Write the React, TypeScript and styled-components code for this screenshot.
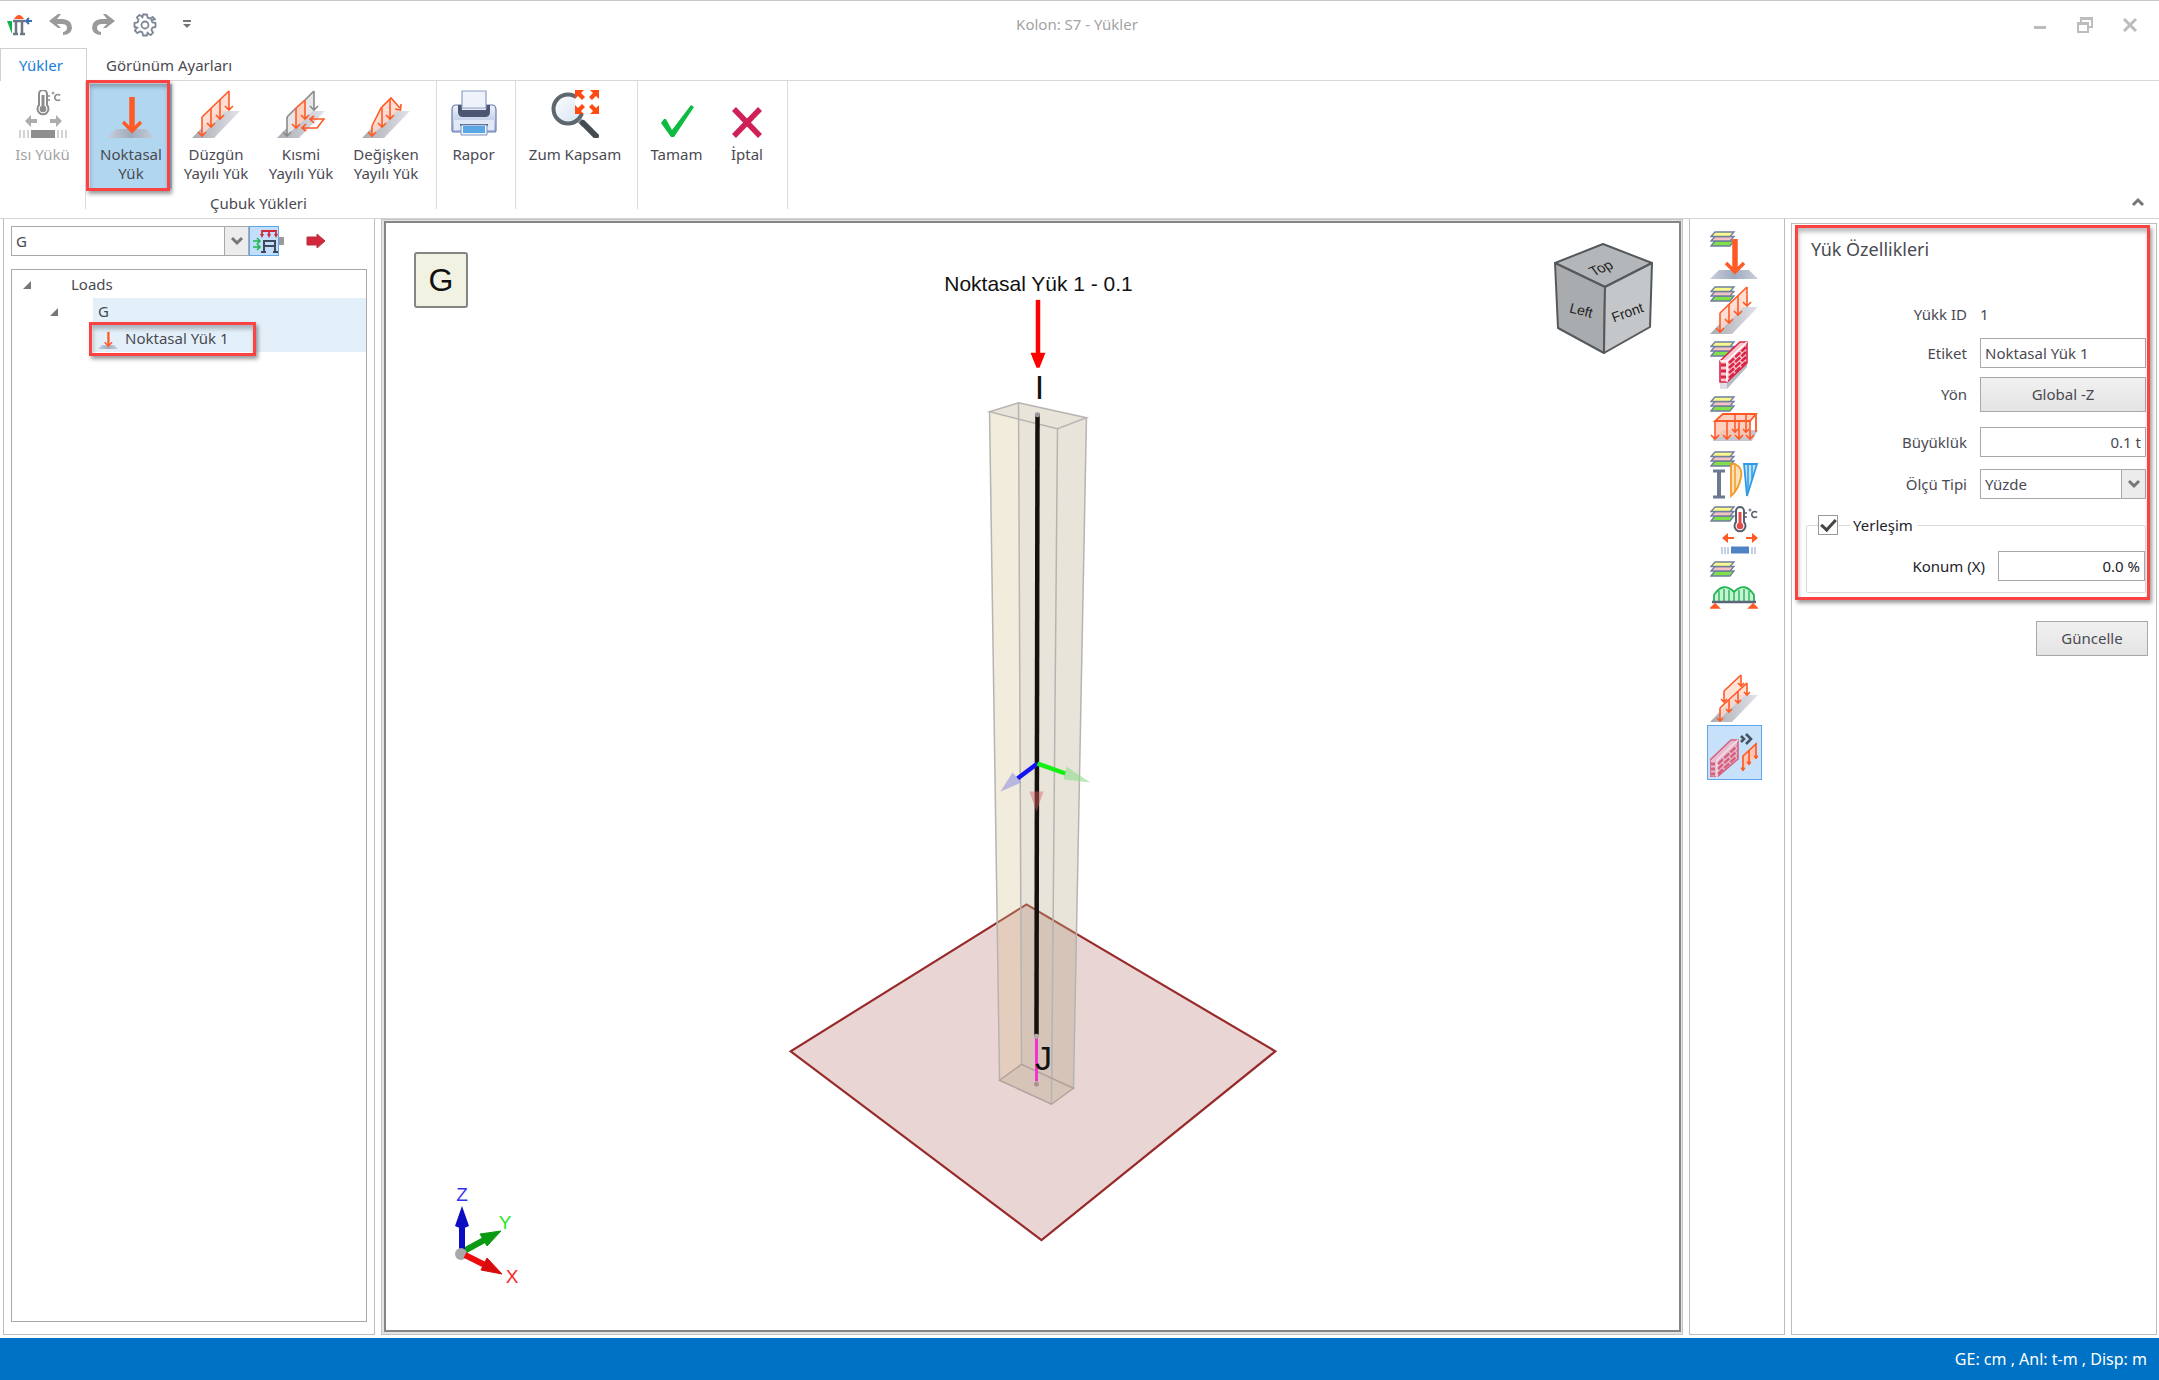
import React from "react";
import styled, { createGlobalStyle, css } from "styled-components";

const uiFont = '"Noto Sans", "Open Sans", sans-serif';
const orange = "#ff5a26";

const GlobalStyle = createGlobalStyle`
  * { box-sizing: border-box; }
  body { margin: 0; background: #fff; }
  button, input, select { font: inherit; color: inherit; }
`;

/* ---------- shell ---------- */

const Window = styled.div`
  min-height: 100vh;
  display: flex;
  flex-direction: column;
  border-top: 1px solid #c8c8c8;
  background: #fff;
  color: #4a4a52;
  font: 15px/19px ${uiFont};
`;

const TitleBar = styled.header`
  height: 47px;
  display: grid;
  grid-template-columns: 1fr auto 1fr;
  align-items: center;
`;

const QuickAccess = styled.div`
  display: flex;
  align-items: center;
  gap: 16px;
  padding-left: 6px;
`;

const IconButton = styled.button`
  display: grid;
  place-items: center;
  width: 26px;
  height: 26px;
  padding: 0;
  border: 0;
  background: none;
`;

const WindowTitle = styled.h1`
  margin: 0;
  font: inherit;
  padding-right: 5px;
  color: #a3a3a3;
`;

const WindowButtons = styled.div`
  display: flex;
  justify-content: flex-end;
  gap: 19px;
  padding-right: 16px;
`;

const TabBar = styled.nav`
  height: 33px;
  display: flex;
  border-bottom: 1px solid #d8d8d8;
`;

const Tab = styled.button<{ $active?: boolean }>`
  padding: 0 18px;
  height: 33px;
  border: 1px solid transparent;
  border-bottom: 0;
  background: none;
  text-align: left;
  ${(p) =>
    p.$active &&
    css`
      width: 87px;
      color: #1580dc;
      background: #fff;
      border-color: #d0d0d0;
    `}
`;

const Ribbon = styled.div`
  display: flex;
  height: 138px;
  border-bottom: 1px solid #d4d4d4;
`;

const RibbonGroup = styled.section<{ $pad?: string }>`
  display: flex;
  flex-direction: column;
  justify-content: space-between;
  padding: ${(p) => p.$pad ?? "0"};
  margin-bottom: 9px;
  padding-top: 3px;
  border-right: 1px solid #dcdcdc;
`;

const RibbonButtons = styled.div`
  display: flex;
  gap: 3px;
`;

const RibbonButton = styled.button<{ $w: number; $selected?: boolean }>`
  position: relative;
  display: flex;
  flex-direction: column;
  align-items: center;
  gap: 7px;
  width: ${(p) => p.$w}px;
  height: 105px;
  padding: 6px 0 0;
  border: 0;
  background: ${(p) => (p.$selected ? "#b1d6f0" : "none")};
  white-space: pre-line;
  &:disabled { color: #a4a4a4; }
`;

const GroupCaption = styled.div`
  text-align: center;
  line-height: 11px;
`;

const RibbonEnd = styled.div`
  flex: 1;
  display: flex;
  justify-content: flex-end;
  align-items: flex-end;
  padding: 0 8px 3px 0;
`;

const Annotation = styled.div<{ $inset: string }>`
  position: absolute;
  inset: ${(p) => p.$inset};
  border: 3px solid #fb4343;
  box-shadow: 2px 3px 4px rgba(0, 0, 0, 0.4), inset 1px 4px 4px rgba(0, 0, 0, 0.26);
  pointer-events: none;
`;

const Workspace = styled.main`
  flex: 1;
  display: grid;
  grid-template-columns: 372px minmax(0, 1fr) 96px 366px;
  gap: 6px;
  padding: 0 2px 3px 3px;
`;

const StatusBar = styled.footer`
  height: 42px;
  display: flex;
  align-items: center;
  justify-content: flex-end;
  padding-right: 12px;
  background: #0072c6;
  color: #fff;
  font-size: 16px;
`;

/* ---------- left panel ---------- */

const LoadsPanel = styled.aside`
  display: flex;
  flex-direction: column;
  padding: 7px 7px 12px;
  border: 1px solid #bdbdbd;
  border-top: 0;
`;

const LoadPicker = styled.div`
  display: flex;
  align-items: center;
  height: 30px;
  margin-bottom: 13px;
`;

const SelectBox = styled.div<{ $w?: number }>`
  display: grid;
  grid-template-columns: 1fr 24px;
  width: ${(p) => (p.$w ? p.$w + "px" : "100%")};
  height: 30px;
  border: 1px solid #a9a9a9;
`;

const Select = styled.select`
  grid-area: 1 / 1 / 2 / 3;
  appearance: none;
  border: 0;
  padding: 0 4px;
  background: #fff;
`;

const SelectArrow = styled.span`
  grid-area: 1 / 2;
  display: grid;
  place-items: center;
  border-left: 1px solid #a9a9a9;
  background: #ececec;
  pointer-events: none;
`;

const FrameToggle = styled.button`
  width: 30px;
  height: 30px;
  padding: 0;
  border: 1px solid #5ea5ea;
  background: #c2defa;
`;

const Grip = styled.span`
  width: 5px;
  height: 8px;
  background: #9b9b9b;
`;

const GoButton = styled(IconButton)`
  margin-left: 19px;
`;

const Tree = styled.ul`
  flex: 1;
  margin: 0;
  padding: 1px 0;
  list-style: none;
  border: 1px solid #a9a9a9;
`;

const TreeRow = styled.li<{ $level: number }>`
  position: relative;
  display: grid;
  grid-template-columns: 16px 16px 1fr;
  height: 27px;
  padding-left: ${(p) => 4 + p.$level * 27}px;
  align-items: center;
`;

const TreeLabel = styled.span<{ $selected?: boolean }>`
  grid-column: 3;
  display: flex;
  align-items: center;
  gap: 7px;
  height: 27px;
  margin-left: 18px;
  padding-left: 5px;
  background: ${(p) => (p.$selected ? "#e3f0fa" : "none")};
`;

const TreeCaret = styled.svg`
  grid-column: 1;
  justify-self: end;
`;

/* ---------- viewport ---------- */

const ViewFrame = styled.section`
  border: 1px solid #c4c4c4;
  padding: 1px 1px 2px 2px;
  background: #e4e4e4;
  display: flex;
`;

const Canvas = styled.div`
  position: relative;
  flex: 1;
  border: 2px solid #858585;
  background: #fff;
  overflow: hidden;
`;

const Scene = styled.svg`
  position: absolute;
  inset: 0;
  width: 100%;
  height: 100%;
`;

const LoadBadge = styled.div`
  position: absolute;
  left: 28px;
  top: 29px;
  width: 54px;
  height: 56px;
  display: grid;
  place-items: center;
  border: 2px solid #858585;
  border-radius: 3px;
  background: #f2f2e3;
  color: #111;
  font: 32px/36px "Liberation Sans", sans-serif;
`;

const ViewCube = styled.svg`
  position: absolute;
  right: 24px;
  top: 17px;
`;

const AxisTriad = styled.svg`
  position: absolute;
  left: 54px;
  bottom: 37px;
`;

/* ---------- tool strip ---------- */

const ToolStrip = styled.aside`
  display: flex;
  flex-direction: column;
  align-items: center;
  padding: 8px 6px 0 0;
  border: 1px solid #bdbdbd;
  border-top: 0;
`;

const ToolButton = styled.button<{ $selected?: boolean; $gap?: boolean }>`
  display: grid;
  place-items: center;
  width: 55px;
  height: 55px;
  padding: 0;
  margin-top: ${(p) => (p.$gap ? "58px" : "0")};
  border: 1px solid ${(p) => (p.$selected ? "#5ea5ea" : "transparent")};
  background: ${(p) => (p.$selected ? "#c8e1fa" : "none")};
`;

/* ---------- properties ---------- */

const Properties = styled.aside`
  margin-top: 4px;
  border: 1px solid #bdbdbd;
`;

const PropertySection = styled.form`
  position: relative;
  padding: 12px 10px 7px 14px;
`;

const SectionTitle = styled.h2`
  margin: 0 0 37px 5px;
  font: 18px/26px ${uiFont};
`;

const Row = styled.div<{ $top?: number }>`
  display: grid;
  grid-template-columns: 161px 1fr;
  column-gap: 13px;
  align-items: center;
  min-height: 30px;
  margin-top: ${(p) => p.$top ?? 0}px;
  & > :first-child { text-align: right; }
`;

const TextBox = styled.input<{ $right?: boolean }>`
  width: 100%;
  min-width: 0;
  height: 30px;
  padding: 0 4px;
  border: 1px solid #a9a9a9;
  background: #fff;
  text-align: ${(p) => (p.$right ? "right" : "left")};
`;

const PushButton = styled.button`
  height: 35px;
  min-width: 112px;
  border: 1px solid #a9a9a9;
  background: linear-gradient(#f1f1f1, #e4e4e4);
`;

const Placement = styled.fieldset`
  margin: 16px 0 0;
  padding: 16px 0 11px;
  min-width: 0;
  border: 1px solid #dadada;
  border-radius: 2px;
  color: #22222a;
`;

const PlacementLegend = styled.legend`
  display: flex;
  align-items: center;
  height: 20px;
  margin-left: 11px;
  padding: 0;
`;

const LegendRule = styled.span`
  width: 12px;
  height: 1px;
  background: #dadada;
`;

const LegendText = styled.label`
  padding: 0 4px 0 3px;
  background: #fff;
`;

const CheckBox = styled.input`
  appearance: none;
  width: 20px;
  height: 20px;
  margin: 0;
  border: 1px solid #999;
  background: #fff;
  display: grid;
  place-items: center;
  &:checked::after {
    content: "";
    width: 6px;
    height: 12px;
    margin-top: -3px;
    border: solid #444;
    border-width: 0 3px 3px 0;
    transform: rotate(42deg);
  }
`;

const PlacementRow = styled.div`
  display: grid;
  grid-template-columns: 1fr 147px;
  column-gap: 13px;
  align-items: center;
  text-align: right;
`;

const Actions = styled.div`
  display: flex;
  justify-content: flex-end;
  padding: 21px 8px 0;
`;

/* ---------- icon parts ---------- */

const Svg = ({ size = 48, children }: { size?: number; children: React.ReactNode }) => (
  <svg width={size} height={size} viewBox="0 0 48 48" fill="none" aria-hidden="true">
    {children}
  </svg>
);

const HiddenSvg = styled.svg`
  position: absolute;
`;

const Defs = () => (
  <HiddenSvg width="0" height="0" aria-hidden="true">
    <defs>
      <linearGradient id="plate" x1="0" x2="1">
        <stop offset="0" stopColor="#a9abb2" />
        <stop offset="1" stopColor="#e2e3ea" />
      </linearGradient>
      <linearGradient id="plateMid" x1="0" x2="1">
        <stop offset="0" stopColor="#c9cfdb" />
        <stop offset="0.5" stopColor="#9fabbd" />
        <stop offset="1" stopColor="#c9cfdb" />
      </linearGradient>
      <linearGradient id="printer" x1="0" x2="0" y1="0" y2="1">
        <stop offset="0" stopColor="#eef2fb" />
        <stop offset="1" stopColor="#a9b8dd" />
      </linearGradient>
      <linearGradient id="glass" x1="0" x2="1" y1="0" y2="1">
        <stop offset="0" stopColor="#ffffff" />
        <stop offset="1" stopColor="#d3e2f1" />
      </linearGradient>
    </defs>
  </HiddenSvg>
);

const Down = ({ x, from, to, c = orange, w = 4 }: { x: number; from: number; to: number; c?: string; w?: number }) => (
  <path d={`M${x} ${from}V${to}M${x - w} ${to - w}L${x} ${to}L${x + w} ${to - w}`} stroke={c} strokeWidth="1.6" />
);

const Slab = () => <path d="M0 48L26 21H48L22 48Z" fill="url(#plate)" />;

const Layers = () => (
  <g stroke="#6f7f9f" strokeWidth="1.3">
    <path d="M1 15L5 10H24L20 15Z" fill="#7fe04a" />
    <path d="M1 10L5 5.500H24L20 10Z" fill="#f4c3c3" />
    <path d="M1 5.500L5 1H24L20 5.500Z" fill="#fbf98b" />
  </g>
);

const PointLoad = ({ size, layers }: { size?: number; layers?: boolean }) => (
  <Svg size={size}>
    <path d="M0 48L9 39H39L48 48Z" fill="url(#plateMid)" />
    {layers && <Layers />}
    <path d={layers ? "M25 8V40" : "M25 7V40"} stroke={orange} strokeWidth="5.500" />
    <path d="M16 32L25 41L34 32" stroke={orange} strokeWidth="3.500" />
  </Svg>
);

const UniformLoad = ({ layers }: { layers?: boolean }) => (
  <Svg>
    <Slab />
    {layers && <Layers />}
    <path d="M10 27L37 1V18L28 27L19 36L10 45Z" fill="#ffd9cc" fillOpacity="0.85" />
    <path d="M10 27L37 1" stroke={orange} strokeWidth="1.600" />
    <Down x={10} from={27} to={46} />
    <Down x={19} from={18} to={37} />
    <Down x={28} from={10} to={29} />
    <Down x={37} from={1} to={20} />
  </Svg>
);

const PartialLoad = () => (
  <Svg>
    <Slab />
    <path d="M10 27L19 18V37L10 45ZM28 10L37 1V20L28 28Z" fill="#e6e6e6" />
    <path d="M19 18L28 10V29L19 37Z" fill="#ffd0c0" />
    <path d="M10 27L19 18M28 10L37 1" stroke="#8a8a8a" strokeWidth="1.600" />
    <Down x={10} from={27} to={46} c="#8a8a8a" />
    <Down x={37} from={1} to={20} c="#8a8a8a" />
    <path d="M19 18L28 10" stroke={orange} strokeWidth="1.600" />
    <Down x={19} from={18} to={38} />
    <Down x={28} from={10} to={29} />
    <path d="M25 38H40L47 29H33M29 34L25 38L29 41M37 26L33 29L37 33" stroke={orange} strokeWidth="1.700" />
  </Svg>
);

const VariableLoad = () => (
  <Svg>
    <Slab />
    <path d="M10 45V35L19 18L29 8L38 18L28 29Z" fill="#ffd9cc" fillOpacity="0.85" />
    <path d="M10 36L19 18L29 8L38 18" stroke={orange} strokeWidth="1.600" />
    <Down x={10} from={36} to={46} />
    <Down x={20} from={18} to={37} />
    <Down x={28} from={9} to={29} />
    <path d="M33 19L38.500 20L39 14" stroke={orange} strokeWidth="1.600" />
  </Svg>
);

const Thermometer = ({ c, hot }: { c: string; hot?: string }) => (
  <g>
    <path d="M20 15V4a4 4 0 0 1 8 0V15a5.500 5.500 0 1 1-8 0Z" fill="#fff" stroke={c} strokeWidth="2" />
    <path d="M24 5V18" stroke={hot ?? c} strokeWidth="3" />
    <circle cx="24" cy="19" r="3.300" fill={hot ?? c} />
    <path d="M28 6H31M28 10H31" stroke={c} strokeWidth="1.500" />
    <circle cx="34" cy="3" r="1" stroke={c} />
    <path d="M41 5.500a3 3 0 1 0 0 4" stroke={c} strokeWidth="1.600" />
  </g>
);

const HeatLoad = () => (
  <Svg>
    <Thermometer c="#8c8c8c" />
    <path d="M6 31L12 25V29H18V33H12V37ZM43 31L37 25V29H31V33H37V37Z" fill="#adadad" />
    <path d="M12 44H36" stroke="#8f8f8f" strokeWidth="8" />
    <path d="M1 40V48M5 40V48M9 40V48M39 40V48M43 40V48M47 40V48" stroke="#c9c9c9" strokeWidth="1.600" />
  </Svg>
);

const HeatTool = () => (
  <Svg>
    <Layers />
    <g transform="translate(6 1)">
      <Thermometer c="#56606c" hot="#e24a4a" />
    </g>
    <path d="M12 32L18 27V31H24V33H18V37ZM48 32L42 27V31H36V33H42V37Z" fill={orange} />
    <path d="M21 44H39" stroke="#4f82c4" strokeWidth="7" />
    <path d="M12 41V48M15 41V48M18 41V48M42 41V48M45 41V48" stroke="#a9bdd6" strokeWidth="1.400" />
  </Svg>
);

const WallTool = () => (
  <Svg>
    <path d="M10 41L37 16V26L17 48H10Z" fill="#b9bcc5" />
    <path d="M10 41V48H17V41Z" fill="#dcdfe6" />
    <Layers />
    <path d="M10 20L30 1H37V22L17 41H10Z" fill="#f9c7cf" stroke="#d92546" strokeWidth="1.600" />
    <path d="M10 20H17V41M17 20L37 1" stroke="#fff" strokeWidth="1.400" />
    <path d="M19 22L36 6M19 27L36 11M19 32L36 16M19 37L36 21" stroke="#d92546" strokeWidth="2.600" strokeDasharray="7 1.500" />
    <path d="M11 24H16M11 30H16M11 36H16" stroke="#d92546" strokeWidth="3" />
  </Svg>
);

const AreaTool = () => (
  <Svg>
    <Layers />
    <path d="M3 42L13 34H48L42 45H3Z" fill="#c4c7cf" />
    <path d="M5 25L13 18H46L40 25V41H5Z" fill="#ffc4b0" fillOpacity="0.800" />
    <path d="M5 25H40L46 18H13ZM46 18V36" stroke={orange} strokeWidth="1.800" />
    {[5, 17, 29, 40].map((x) => (
      <Down key={x} x={x} from={25} to={43} />
    ))}
    <Down x={25} from={18} to={36} w={3} />
    <Down x={36} from={18} to={36} w={3} />
  </Svg>
);

const PressureTool = () => (
  <Svg>
    <Layers />
    <path d="M3 20H15M3 46H15" stroke="#6b7a92" strokeWidth="3" />
    <path d="M9 20V46" stroke="#6b7a92" strokeWidth="4" />
    <path d="M21 13H25Q33 17 31 26Q29 38 21 45Z" fill="#fde2b8" stroke="#f39a2b" strokeWidth="1.800" />
    <path d="M25 13V41" stroke="#f39a2b" strokeWidth="1.500" />
    <path d="M34 13H47L37 45Z" fill="#bfe3fb" stroke="#2e9be6" strokeWidth="1.800" />
    <path d="M38 13V40M42 13V28" stroke="#2e9be6" strokeWidth="1.500" />
  </Svg>
);

const BridgeTool = () => (
  <Svg>
    <Layers />
    <path d="M4 41V34Q13 20 24 31Q35 20 44 34V41Z" fill="#c9f3d5" stroke="#24b556" strokeWidth="1.800" />
    <path d="M9 41V30M14 41V28M19 41V29M24 41V32M29 41V29M34 41V28M39 41V30" stroke="#24b556" strokeWidth="1.400" />
    <path d="M2 41H46" stroke="#59667a" strokeWidth="2.500" />
    <path d="M5 43L1 47H9ZM43 43L39 47H47Z" fill={orange} stroke={orange} strokeWidth="1.600" />
  </Svg>
);

const CombinedTool = () => (
  <Svg>
    <Slab />
    <path d="M14 17L31 1V10L37 9V20L28 28L19 36L10 45V34L14 28Z" fill="#ffd9cc" fillOpacity="0.800" />
    <path d="M14 17L31 1M10 34L37 9" stroke={orange} strokeWidth="1.700" />
    <Down x={14} from={17} to={28} w={3} />
    <Down x={31} from={1} to={12} w={3} />
    <Down x={10} from={34} to={47} w={3} />
    <Down x={19} from={26} to={38} w={3} />
    <Down x={28} from={18} to={29} w={3} />
    <Down x={37} from={9} to={21} w={3} />
  </Svg>
);

const ConvertTool = () => (
  <Svg>
    <path d="M0 31L21 11H28V30L7 48H0Z" fill="#e6bcd0" stroke="#d4627f" strokeWidth="1.600" />
    <path d="M7 31L28 11M7 31V48" stroke="#f6dfe8" strokeWidth="1.400" />
    <path d="M8 35L27 17M8 40L27 22M8 45L27 27" stroke="#d4627f" strokeWidth="2.500" strokeDasharray="7 1.500" />
    <path d="M1 35H5M1 40H5M1 45H5" stroke="#d4627f" strokeWidth="3" />
    <path d="M31 7L34 10L31 13M36 5L41 10L36 15" stroke="#46525f" strokeWidth="2.600" />
    <path d="M33 27L46 15V28L39 34L33 40Z" fill="#ffc7b3" />
    <path d="M33 40V27L46 15V28M39 22V34" stroke={orange} strokeWidth="1.700" />
    <path d="M33 42L31 39H35ZM39 36L37 33H41ZM46 30L44 27H48Z" fill={orange} stroke={orange} />
  </Svg>
);

const PrinterIcon = () => (
  <Svg>
    <path d="M2 20Q2 15 6 15H42Q46 15 46 20V40Q46 42 44 42H4Q2 42 2 40Z" fill="url(#printer)" stroke="#6a7cab" strokeWidth="1.200" />
    <path d="M8 15H12V20H36V15H40V22Q40 27 35 27H13Q8 27 8 22Z" fill="#4b5673" />
    <path d="M12 1H36V18H12Z" fill="#eef2fa" stroke="#8e9dc4" strokeWidth="1.200" />
    <path d="M4 30H44V40H4Z" fill="#e1e8f6" />
    <path d="M10 34H38V36H10Z" fill="#4b5673" />
    <path d="M11 35H37V45H11Z" fill="#eef4fb" stroke="#7f92c0" />
    <path d="M13 36H35V43H13Z" fill="#5aa7e6" />
  </Svg>
);

const ZoomExtentsIcon = () => (
  <Svg>
    <circle cx="17" cy="19" r="14.500" fill="url(#glass)" stroke="#5e676e" strokeWidth="4" />
    <path d="M28 30L33 35" stroke="#848b91" strokeWidth="5" />
    <path d="M32 33L45 46" stroke="#454c52" strokeWidth="6" strokeLinecap="round" />
    <path d="M24 0H48V24H24Z" fill="#fff" />
    <path
      d="M24 0H33L30 3L34 7L31 10L27 6L24 9ZM48 0V9L45 6L41 10L38 7L42 3L39 0ZM24 24V15L27 18L31 14L34 17L30 21L33 24ZM48 24H39L42 21L38 17L41 14L45 18L48 15Z"
      fill="#ff4a12"
    />
  </Svg>
);

const CheckIcon = () => (
  <Svg>
    <path d="M8 33L11 29Q13 28 14 31L19 40L38 15L41 17L21 47H18Z" fill="#0cbc42" />
  </Svg>
);

const CancelIcon = () => (
  <Svg>
    <path d="M11 19L37 46M37 19L11 46" stroke="#cf2158" strokeWidth="5.500" />
  </Svg>
);

const FrameIcon = () => (
  <svg width="28" height="28" viewBox="0 0 28 28" fill="none" aria-hidden="true">
    <path d="M12 9V4H26V9M19 4V9" stroke="#d2283f" strokeWidth="1.800" />
    <path d="M10 7H14L12 11ZM17 7H21L19 11ZM24 7H28L26 11Z" fill="#d2283f" />
    <path d="M14 25V14H25V25M14 19H25M11 25H16M23 25H28" stroke="#3e4a5c" strokeWidth="2" />
    <path d="M3 14H9M3 20H9M7 11L10 14L7 17M7 17L10 20L7 23" stroke="#23b556" strokeWidth="1.600" />
  </svg>
);

const Chevron = ({ up }: { up?: boolean }) => (
  <svg width="14" height="10" viewBox="0 0 14 10" fill="none" aria-hidden="true">
    <path d={up ? "M2 8L7 3L12 8" : "M2 2L7 7L12 2"} stroke="#767676" strokeWidth="3" />
  </svg>
);

const Caret = () => (
  <TreeCaret width="10" height="10" viewBox="0 0 10 10" aria-hidden="true">
    <path d="M9 1V9H1Z" fill="#777" />
  </TreeCaret>
);

const UndoIcon = ({ flip }: { flip?: boolean }) => (
  <svg width="24" height="22" viewBox="0 0 24 22" fill="none" aria-hidden="true">
    <g transform={flip ? "matrix(-1 0 0 1 24 0)" : undefined}>
      <path d="M9 0H12L8 5H14Q23 6 23 14Q22 21 14 21V18Q18 17 18 14Q18 10 13 10H8L12 14H9L0 7Z" fill="#9a9a9a" />
    </g>
  </svg>
);

const GearIcon = () => (
  <svg width="24" height="24" viewBox="0 0 24 24" fill="none" stroke="#7d8695" strokeWidth="1.800" aria-hidden="true">
    <path d="M10 1.500H14L14.600 4.600L17 5.600L19.600 3.900L20.600 4.900L22.100 6.400L18.400 7L19.400 9.400L22.500 10V14L19.400 14.600L18.400 17L20.100 19.600L17.600 22.100L15 20.400L14.600 19.400L14 22.500H10L9.400 19.400L7 18.400L4.400 20.100L1.900 17.600L3.600 15L4.600 14.600L1.500 14V10L4.600 9.400L5.600 7L3.900 4.400L6.400 1.900L9 3.600L9.400 4.600Z" strokeLinejoin="round" />
    <circle cx="12" cy="12" r="3.500" />
  </svg>
);

const AppIcon = () => (
  <svg width="26" height="22" viewBox="0 0 26 22" fill="none" aria-hidden="true">
    <path d="M1 7H6V20Z" fill="#0db34a" />
    <path d="M8 5Q13 -3 18 5Z" fill={orange} />
    <path d="M7 7H19M10 7V20M16 7V20M7 20H12M14 20H19" stroke="#6c7686" strokeWidth="2.500" />
    <path d="M20 7H26M23 4L20 7L23 10" stroke="#3b6fb5" strokeWidth="2" />
  </svg>
);

/* ---------- 3D scene ---------- */

const ColumnScene = () => (
  <Scene viewBox="386 224 1294 1106" role="img" aria-label="Kolon S7">
    <defs>
      <clipPath id="leftFace"><path d="M990 412L1019 403L1022 1065L1000 1081Z" /></clipPath>
      <clipPath id="rightFace"><path d="M1019 403L1087 418L1074 1089L1052 1105L1000 1081L1022 1065Z" /></clipPath>
    </defs>
    <path d="M1027 905L1276 1052L1042 1241L791 1052Z" fill="#ead5d5" stroke="#982a2a" strokeWidth="2.200" />
    <path d="M990 412L1019 403L1022 1065L1000 1081Z" fill="#f2ecdd" />
    <path d="M1019 403L1087 418L1074 1089L1052 1105L1000 1081L1022 1065Z" fill="#e8e4d9" />
    <path d="M990 412L1019 403L1087 418L1058 429Z" fill="#e8e4d9" />
    <path d="M1027 905L1276 1052L1042 1241L791 1052Z" fill="#e4cdbd" stroke="#a65a48" strokeWidth="2" clipPath="url(#leftFace)" />
    <path d="M1027 905L1276 1052L1042 1241L791 1052Z" fill="#d6c4b8" stroke="#a65a48" strokeWidth="2" clipPath="url(#rightFace)" />
    <g fill="none" stroke="#b6b4b2" strokeWidth="1.500">
      <path d="M990 412L1019 403L1087 418L1058 429Z" />
      <path d="M990 412L1000 1081M1019 403L1022 1065M1087 418L1074 1089M1058 429L1052 1105" />
      <path d="M1000 1081L1022 1065L1074 1089L1052 1105Z" stroke="#b3a19b" />
    </g>
    <path d="M1038 414L1037 1036" stroke="#15120d" strokeWidth="4.500" />
    <circle cx="1038" cy="415" r="2.500" fill="#999" />
    <path d="M1037 1038V1082" stroke="#ef35cf" strokeWidth="3" />
    <circle cx="1037" cy="1037" r="2.500" fill="#b3aaa6" />
    <circle cx="1037" cy="1085" r="2.500" fill="#a4938f" />
    <path d="M1030 792H1044L1037 812Z" fill="#d96060" fillOpacity="0.450" />
    <path d="M1038 764L1018 779" stroke="#1414f0" strokeWidth="4.500" />
    <path d="M1013 773L1022 783L1001 792Z" fill="#9a9ae0" fillOpacity="0.650" />
    <path d="M1038 764L1066 774" stroke="#14f014" strokeWidth="4.500" />
    <path d="M1067 767L1064 780L1091 783Z" fill="#8fdc8f" fillOpacity="0.600" />
    <path d="M1038.500 300V355" stroke="#f00" strokeWidth="4.500" />
    <path d="M1031 353H1046L1040 368H1037Z" fill="#f00" />
    <g fill="#111" fontFamily="Liberation Sans, sans-serif" textAnchor="middle">
      <text x="1039" y="291" fontSize="21">Noktasal Yük 1 - 0.1</text>
      <text x="1040" y="399" fontSize="34">I</text>
      <text x="1044" y="1071" fontSize="34">J</text>
    </g>
  </Scene>
);

const Cube = () => (
  <ViewCube width="102" height="114" viewBox="1553 240 102 114" aria-label="Top Left Front" role="img">
    <g stroke="#55595c" strokeWidth="2" strokeLinejoin="round">
      <path d="M1603 244L1652 263L1605 287L1555 263Z" fill="#b4b7b9" />
      <path d="M1555 263L1605 287L1604 353L1558 328Z" fill="#a9acae" />
      <path d="M1652 263L1605 287L1604 353L1650 327Z" fill="#c4c7c9" />
    </g>
    <g fill="#222" fontFamily="Liberation Sans, sans-serif" textAnchor="middle">
      <text transform="translate(1604 272) rotate(-22) skewX(15)" fontSize="14">Top</text>
      <text transform="translate(1580 315) rotate(14)" fontSize="14">Left</text>
      <text transform="translate(1629 317) rotate(-20)" fontSize="14">Front</text>
    </g>
  </ViewCube>
);

const Triad = () => (
  <AxisTriad width="84" height="110" viewBox="440 1184 84 110" aria-label="X Y Z" role="img">
    <path d="M464 1252L486 1240" stroke="#0a9a12" strokeWidth="6" />
    <path d="M480 1235L487 1247L501 1232Z" fill="#0a9a12" stroke="#0a9a12" />
    <path d="M462 1252V1226" stroke="#0c0cc0" strokeWidth="6" />
    <path d="M462 1207L455 1227Q462 1231 469 1227Z" fill="#0c0cc0" />
    <circle cx="461" cy="1255" r="6" fill="#a9a9a9" />
    <path d="M465 1256L485 1266" stroke="#ec0c0c" strokeWidth="6" />
    <path d="M487 1259L481 1271L502 1275Z" fill="#d80c0c" stroke="#d80c0c" />
    <g fontFamily="Liberation Sans, sans-serif" fontSize="19" textAnchor="middle">
      <text x="462" y="1202" fill="#3232f0">Z</text>
      <text x="505" y="1230" fill="#1ee61e">Y</text>
      <text x="512" y="1284" fill="#f52a2a">X</text>
    </g>
  </AxisTriad>
);

const loadButtons = [
  { label: "Noktasal\nYük", icon: <PointLoad />, selected: true },
  { label: "Düzgün\nYayılı Yük", icon: <UniformLoad /> },
  { label: "Kısmi\nYayılı Yük", icon: <PartialLoad /> },
  { label: "Değişken\nYayılı Yük", icon: <VariableLoad /> },
];

const tools = [
  { name: "Noktasal yükler", icon: <PointLoad layers /> },
  { name: "Yayılı yükler", icon: <UniformLoad layers /> },
  { name: "Duvar yükleri", icon: <WallTool /> },
  { name: "Alan yükleri", icon: <AreaTool /> },
  { name: "Basınç yükleri", icon: <PressureTool /> },
  { name: "Isı yükleri", icon: <HeatTool /> },
  { name: "Köprü yükleri", icon: <BridgeTool /> },
  { name: "Birleşik yükler", icon: <CombinedTool />, gap: true },
  { name: "Duvar yükünü dönüştür", icon: <ConvertTool />, selected: true },
];

export default function App() {
  return (
    <Window>
      <GlobalStyle />
      <Defs />
      <TitleBar>
        <QuickAccess>
          <IconButton aria-label="Uygulama"><AppIcon /></IconButton>
          <IconButton aria-label="Geri al"><UndoIcon /></IconButton>
          <IconButton aria-label="Yinele"><UndoIcon flip /></IconButton>
          <IconButton aria-label="Ayarlar"><GearIcon /></IconButton>
          <IconButton aria-label="Özelleştir">
            <svg width="10" height="9" viewBox="0 0 10 9" aria-hidden="true">
              <path d="M1 0H9V2H1ZM1 4H9L5 8Z" fill="#767676" />
            </svg>
          </IconButton>
        </QuickAccess>
        <WindowTitle>Kolon: S7 - Yükler</WindowTitle>
        <WindowButtons>
          <IconButton aria-label="Küçült">
            <svg width="16" height="16" viewBox="0 0 16 16" aria-hidden="true"><path d="M2 9H14V12H2Z" fill="#bdbdbd" /></svg>
          </IconButton>
          <IconButton aria-label="Önceki boyut">
            <svg width="16" height="16" viewBox="0 0 16 16" fill="none" stroke="#bdbdbd" strokeWidth="2" aria-hidden="true">
              <path d="M4 5V1H15V10H12M1 6H11V15H1ZM1 7H11M4 2H15" />
            </svg>
          </IconButton>
          <IconButton aria-label="Kapat">
            <svg width="16" height="16" viewBox="0 0 16 16" stroke="#bdbdbd" strokeWidth="3" aria-hidden="true">
              <path d="M2 2L14 14M14 2L2 14" />
            </svg>
          </IconButton>
        </WindowButtons>
      </TitleBar>

      <TabBar>
        <Tab $active>Yükler</Tab>
        <Tab>Görünüm Ayarları</Tab>
      </TabBar>

      <Ribbon>
        <RibbonGroup>
          <RibbonButton $w={85} disabled><HeatLoad />Isı Yükü</RibbonButton>
        </RibbonGroup>
        <RibbonGroup $pad="0 9px 0 4px">
          <RibbonButtons>
            {loadButtons.map((b) => (
              <RibbonButton key={b.label} $w={82} $selected={b.selected}>
                {b.icon}
                <span>{b.label}</span>
                {b.selected && <Annotation $inset="-4px 2px -2px -4px" />}
              </RibbonButton>
            ))}
          </RibbonButtons>
          <GroupCaption>Çubuk Yükleri</GroupCaption>
        </RibbonGroup>
        <RibbonGroup $pad="0 5px 0 0">
          <RibbonButton $w={73}><PrinterIcon />Rapor</RibbonButton>
        </RibbonGroup>
        <RibbonGroup $pad="0 3px 0 0">
          <RibbonButton $w={118}><ZoomExtentsIcon />Zum Kapsam</RibbonButton>
        </RibbonGroup>
        <RibbonGroup $pad="0 10px 0 1px">
          <RibbonButtons>
            <RibbonButton $w={75}><CheckIcon />Tamam</RibbonButton>
            <RibbonButton $w={60}><CancelIcon />İptal</RibbonButton>
          </RibbonButtons>
        </RibbonGroup>
        <RibbonEnd>
          <IconButton aria-label="Şeridi daralt"><Chevron up /></IconButton>
        </RibbonEnd>
      </Ribbon>

      <Workspace>
        <LoadsPanel>
          <LoadPicker>
            <SelectBox $w={238}>
              <Select aria-label="Yük durumu" defaultValue="G"><option>G</option></Select>
              <SelectArrow><Chevron /></SelectArrow>
            </SelectBox>
            <FrameToggle aria-label="Yükleri göster"><FrameIcon /></FrameToggle>
            <Grip />
            <GoButton aria-label="Git">
              <svg width="20" height="16" viewBox="0 0 20 16" aria-hidden="true">
                <path d="M1 4H11V1L19 8L11 15V12H1Z" fill="#d3283c" stroke="#b5303e" />
              </svg>
            </GoButton>
          </LoadPicker>
          <Tree>
            <TreeRow $level={0}><Caret /><TreeLabel>Loads</TreeLabel></TreeRow>
            <TreeRow $level={1}><Caret /><TreeLabel $selected>G</TreeLabel></TreeRow>
            <TreeRow $level={1}>
              <TreeLabel $selected><PointLoad size={20} />Noktasal Yük 1</TreeLabel>
              <Annotation $inset="-3px 110px -4px 77px" />
            </TreeRow>
          </Tree>
        </LoadsPanel>

        <ViewFrame>
          <Canvas>
            <ColumnScene />
            <LoadBadge>G</LoadBadge>
            <Cube />
            <Triad />
          </Canvas>
        </ViewFrame>

        <ToolStrip>
          {tools.map((t) => (
            <ToolButton key={t.name} aria-label={t.name} $selected={t.selected} $gap={t.gap}>{t.icon}</ToolButton>
          ))}
        </ToolStrip>

        <Properties>
          <PropertySection onSubmit={(e) => e.preventDefault()}>
            <SectionTitle>Yük Özellikleri</SectionTitle>
            <Row><span>Yükk ID</span><span>1</span></Row>
            <Row $top={9}>
              <label htmlFor="tag">Etiket</label>
              <TextBox id="tag" defaultValue="Noktasal Yük 1" />
            </Row>
            <Row $top={9}>
              <label htmlFor="dir">Yön</label>
              <PushButton id="dir" type="button">Global -Z</PushButton>
            </Row>
            <Row $top={15}>
              <label htmlFor="mag">Büyüklük</label>
              <TextBox id="mag" $right defaultValue="0.1 t" />
            </Row>
            <Row $top={12}>
              <label htmlFor="unit">Ölçü Tipi</label>
              <SelectBox>
                <Select id="unit" defaultValue="Yüzde"><option>Yüzde</option></Select>
                <SelectArrow><Chevron /></SelectArrow>
              </SelectBox>
            </Row>
            <Placement>
              <PlacementLegend>
                <CheckBox id="placement" type="checkbox" defaultChecked />
                <LegendRule />
                <LegendText htmlFor="placement">Yerleşim</LegendText>
              </PlacementLegend>
              <PlacementRow>
                <label htmlFor="pos">Konum (X)</label>
                <TextBox id="pos" $right defaultValue="0.0 %" />
              </PlacementRow>
            </Placement>
            <Annotation $inset="1px 6px 0 3px" />
          </PropertySection>
          <Actions><PushButton type="button">Güncelle</PushButton></Actions>
        </Properties>
      </Workspace>

      <StatusBar>GE: cm , Anl: t-m , Disp: m</StatusBar>
    </Window>
  );
}
